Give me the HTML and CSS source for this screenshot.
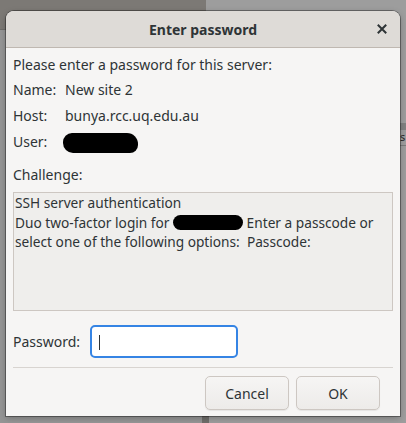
FILE: index.html
```html
<!DOCTYPE html>
<html>
<head>
<meta charset="utf-8">
<link rel="stylesheet" href="styles.css">
</head>
<body>
<div class="desktop">
  <div class="bg-window-left"></div>
  <div class="bg-window-right">
    <div class="bg-band"></div>
    <div class="bg-text">s</div>
    <div class="bg-line"></div>
  </div>
  <div class="bg-bottom-bar"></div>

  <div class="dialog">
    <div class="header">
      <span class="title">Enter password</span>
      <svg class="close" width="10" height="10" viewBox="0 0 10 10"><path d="M1.5 1.5 L8.5 8.5 M8.5 1.5 L1.5 8.5" stroke="#2e3436" stroke-width="2" stroke-linecap="square" fill="none"/></svg>
    </div>
    <div class="content">
      <div class="intro">Please enter a password for this server:</div>
      <div class="info">
        <span>Name:</span><span>New site 2</span>
        <span>Host:</span><span>bunya.rcc.uq.edu.au</span>
        <span>User:</span><span><span class="blob blob-user"></span></span>
      </div>
      <div class="challenge-label">Challenge:</div>
      <div class="challenge">SSH server authentication<br>Duo two-factor login for <span class="blob blob-inline"></span> Enter a passcode or<br>select one of the following options:&nbsp; Passcode:</div>
      <div class="pw-row">
        <span class="pw-label">Password:</span>
        <div class="pw-input"><span class="caret"></span></div>
      </div>
      <div class="separator"></div>
      <div class="buttons">
        <div class="btn">Cancel</div>
        <div class="btn">OK</div>
      </div>
    </div>
  </div>
</div>
</body>
</html>
```

FILE: styles.css
```css
* { box-sizing: border-box; }
html, body { margin: 0; padding: 0; }
body {
  width: 406px;
  height: 423px;
  overflow: hidden;
  font-family: "Noto Sans", "DejaVu Sans", sans-serif;
  font-size: 14px;
  color: #2e3436;
}
.desktop {
  position: relative;
  width: 406px;
  height: 423px;
  background: #959595;
}
.bg-window-left {
  position: absolute;
  left: 0; top: 0;
  width: 206px; height: 30px;
  background: #7c7975;
  border-bottom: 1px solid #6e6c69;
}
.bg-window-right {
  position: absolute;
  left: 206px; top: 0;
  width: 200px; height: 423px;
  background: #9d9d9d;
}
.bg-band {
  position: absolute;
  left: 0; right: 0; top: 123px; height: 7px;
  background: #818181;
}
.bg-text {
  position: absolute;
  left: 194px; top: 131px;
  font-size: 11px;
  line-height: 12px;
  color: #2a2a2a;
}
.bg-line {
  position: absolute;
  left: 0; right: 0; top: 145px; height: 1px;
  background: #7a7a7a;
}
.bg-bottom-bar {
  position: absolute;
  left: 202px; top: 410px;
  width: 7px; height: 13px;
  background: #6f6d6a;
}
.dialog {
  position: absolute;
  left: 6px; top: 11px;
  width: 394px; height: 405px;
  background: #f6f5f4;
  border-radius: 8px 8px 0 0;
  box-shadow: 0 0 0 1px rgba(0,0,0,0.35), 0 2px 6px rgba(0,0,0,0.25);
  display: flex;
  flex-direction: column;
  overflow: hidden;
}
.header {
  height: 37px;
  flex: none;
  background: #dedbd7;
  border-bottom: 1px solid #bfb8b1;
  display: flex;
  align-items: center;
  justify-content: center;
  position: relative;
}
.title {
  font-weight: bold;
  font-size: 14px;
  color: #2e3436;
  margin-top: 1px;
}
.close {
  position: absolute;
  right: 13px;
  top: 13px;
}
.content {
  flex: 1;
  padding: 7px 7px 0 7px;
  display: flex;
  flex-direction: column;
  line-height: 19px;
}
.intro { height: 19px; }
.info {
  margin-top: 6px;
  display: grid;
  grid-template-columns: 52px 1fr;
  row-gap: 7px;
}
.info > span { height: 19px; }
.blob {
  display: inline-block;
  background: #000;
  vertical-align: middle;
}
.blob-user {
  width: 75px; height: 20px;
  border-radius: 9px 11px 8px 10px;
  margin-left: -2px;
  filter: blur(0.6px);
}
.blob-inline {
  width: 70px; height: 15px;
  border-radius: 8px;
  vertical-align: -2px;
  filter: blur(0.5px);
}
.challenge-label {
  margin-top: 14px;
  height: 19px;
}
.challenge {
  margin-top: 8px;
  height: 119px;
  background: #efeeec;
  border: 1px solid #cdc7c2;
  padding: 0 1px;
  font-size: 13.7px;
  line-height: 19.5px;
}
.pw-row {
  margin-top: 14px;
  display: flex;
  align-items: center;
  height: 33px;
}
.pw-label { width: 77px; }
.pw-input {
  width: 148px;
  height: 33px;
  background: #fff;
  border: 2px solid #3584e4;
  border-radius: 5px;
  padding: 8px 0 0 7px;
}
.caret {
  display: block;
  width: 1px;
  height: 15px;
  background: #2e3436;
}
.separator {
  margin-top: 9px;
  height: 1px;
  background: #d8d4d0;
}
.buttons {
  margin-top: 8px;
  display: flex;
  justify-content: flex-end;
  gap: 7px;
  padding-right: 13px;
}
.btn {
  width: 84px;
  height: 34px;
  border: 1px solid #cdc7c2;
  border-radius: 5px;
  background: linear-gradient(#f6f5f4, #edebe9);
  display: flex;
  align-items: center;
  justify-content: center;
  box-shadow: 0 1px 1px rgba(0,0,0,0.07);
}
```
